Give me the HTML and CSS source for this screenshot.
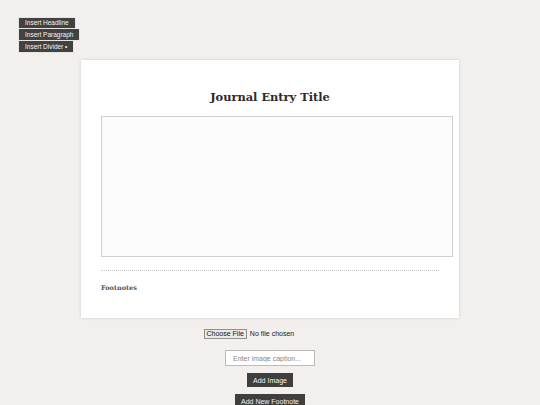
FILE: index.html
```html
<!DOCTYPE html>
<html>
<head>
<meta charset="utf-8">
<link rel="stylesheet" href="styles.css">
</head>
<body>
<div class="toolbar">
  <button class="tool">Insert Headline</button>
  <button class="tool">Insert Paragraph</button>
  <button class="tool">Insert Divider •</button>
</div>
<div class="card">
  <h1 class="title">Journal Entry Title</h1>
  <div class="editor"></div>
  <hr class="divider">
  <h3 class="footnotes">Footnotes</h3>
</div>
<div class="controls">
  <input type="file" class="file">
  <input type="text" class="caption" placeholder="Enter image caption...">
  <button class="action">Add Image</button>
  <button class="action">Add New Footnote</button>
</div>
</body>
</html>
```
FILE: styles.css
```css
html, body {
  margin: 0;
  padding: 0;
  background: #f2efec;
  font-family: "Liberation Sans", Arial, sans-serif;
}
body {
  padding-top: 17px;
}
.toolbar {
  display: flex;
  flex-direction: column;
  align-items: flex-start;
  margin-left: 18px;
}
.tool {
  font-family: "Liberation Sans", Arial, sans-serif;
  font-size: 6.5px;
  height: 12px;
  line-height: 10px;
  padding: 0 6px;
  background: #424242;
  color: #f4f4f4;
  border: 1px solid #e8e6e3;
  border-top: none;
  margin: 0;
  cursor: pointer;
}
.tool:first-child {
  border-top: 1px solid #e8e6e3;
}
.card {
  margin: 7px 0 0 81px;
  width: 378px;
  height: 258px;
  box-sizing: border-box;
  background: #fff;
  padding: 20px;
  box-shadow: 0 0 3px rgba(0,0,0,0.15);
}
.title {
  font-family: "DejaVu Serif", Georgia, serif;
  font-size: 11.4px;
  font-weight: bold;
  color: #2b2b2b;
  text-align: center;
  margin: 9px 0 11px;
  line-height: 16px;
}
.editor {
  width: 100%;
  height: 127px;
  padding: 6px;
  border: 1px solid #cfcfcf;
  background: #fcfcfc;
}
.divider {
  border: none;
  border-top: 1px dotted #c8c8c8;
  margin: 13px 0 0;
  height: 0;
}
.footnotes {
  font-family: "DejaVu Serif", Georgia, serif;
  font-size: 6.5px;
  font-weight: bold;
  color: #555;
  margin: 12px 0 0;
  line-height: 10px;
}
.controls {
  display: flex;
  flex-direction: column;
  align-items: center;
  margin-top: 11px;
}
.file {
  font-family: "Liberation Sans", Arial, sans-serif;
  font-size: 7px;
  color: #222;
  height: 10px;
  line-height: 10px;
  margin: 0 0 11px 0;
}
.file::file-selector-button {
  font-family: "Liberation Sans", Arial, sans-serif;
  font-size: 7px;
  height: 10px;
  line-height: 8px;
  padding: 0 2px;
  margin: 0 3px 0 0;
  border: 1px solid #8f8f8f;
  border-radius: 0;
  background: #e9e9e9;
  color: #111;
}
.caption {
  width: 90px;
  height: 16px;
  box-sizing: border-box;
  font-family: "Liberation Sans", Arial, sans-serif;
  font-size: 7px;
  padding: 0 7px;
  border: 1px solid #bbb;
  background: #fff;
  margin-bottom: 7px;
}
.caption::placeholder {
  color: #888;
}
.action {
  font-family: "Liberation Sans", Arial, sans-serif;
  font-size: 7px;
  height: 14px;
  padding: 0 6px;
  background: #3f3f3f;
  color: #f2f2f2;
  border: none;
  margin-bottom: 7px;
}
```
